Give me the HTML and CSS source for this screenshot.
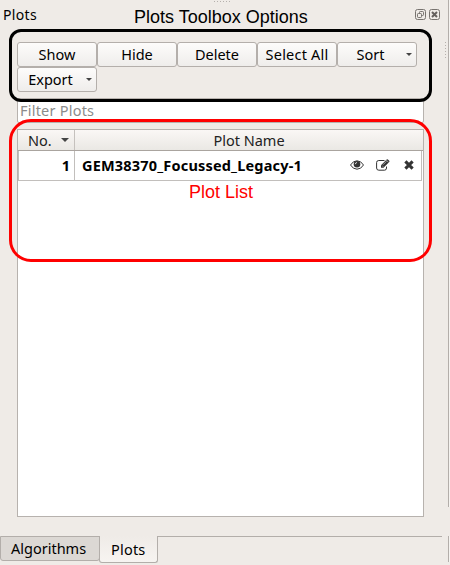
FILE: index.html
```html
<!DOCTYPE html>
<html lang="en">
<head>
<meta charset="utf-8">
<title>Plots</title>
<link rel="stylesheet" href="styles.css">
</head>
<body>
<div class="window">
  <main class="dock">
    <header class="titlebar">
      <span class="dock-title">Plots</span>
      <span class="caption">Plots Toolbox Options</span>
      <svg class="window-icons" width="26" height="12" viewBox="0 0 26 12" fill="none" stroke="#77736f">
        <rect x=".5" y=".5" width="10" height="10" rx="2"/>
        <rect x="4.5" y="2.5" width="4" height="4" rx=".8"/>
        <rect x="2.5" y="4.5" width="4" height="4" rx=".8" fill="#efebe7"/>
        <rect x="14.5" y=".5" width="10" height="10" rx="2"/>
        <path d="M17 3l5 5M22 3l-5 5" stroke="#65615e" stroke-width="2"/>
      </svg>
    </header>
    <div class="toolbar">
      <button class="show"><span>Show</span></button>
      <button class="hide"><span>Hide</span></button>
      <button class="delete"><span>Delete</span></button>
      <button class="select"><span>Select All</span></button>
      <button class="menu sort"><span>Sort</span></button>
      <button class="menu export"><span>Export</span></button>
    </div>
    <div class="filter"><span>Filter Plots</span></div>
    <section class="list">
      <div class="list-head">
        <div class="col-no"><span>No.</span></div>
        <div class="col-name"><span>Plot Name</span></div>
      </div>
      <div class="list-row">
        <div class="cell-no">1</div>
        <div class="cell-name"><span>GEM38370_Focussed_Legacy-1</span></div>
        <div class="actions">
          <svg width="14" height="12" viewBox="0 0 14 12"><path d="M.5 6Q3 1.8 7 1.8T13.5 6Q11 10.2 7 10.2T.5 6Z" fill="none" stroke="#333"/><circle cx="7" cy="5.3" r="3.3" fill="#333"/><path d="M5.3 5.2Q5.4 3.6 7 3.5" fill="none" stroke="#fff" stroke-width=".8"/></svg>
          <svg width="14" height="12" viewBox="0 0 14 12"><path d="M8.5 1.5H2.8Q.6 1.5.6 3.5V9Q.6 11.2 2.8 11.2H8.5Q10.5 11.2 10.5 9V7.5" fill="none" stroke="#333"/><path d="M5 8.8V6.2L10.7.5Q11.3-.1 11.9.5L13.2 1.8Q13.7 2.4 13.2 3L7.5 8.8Z" fill="#333"/><path d="M6 6.5L7.3 7.8M7 5.8L10.5 2.3M10.3 1.1L12.6 3.4" fill="none" stroke="#ddd" stroke-width=".6"/></svg>
          <svg width="10" height="10" viewBox="0 0 10 10"><path d="M1.4 1.4L8.6 8.6M8.6 1.4L1.4 8.6" stroke="#333" stroke-width="3.1"/></svg>
        </div>
      </div>
      <div class="note">Plot List</div>
    </section>
    <nav class="tabs">
      <div class="tab algorithms"><span>Algorithms</span></div>
      <div class="tab plots"><span>Plots</span></div>
      <div class="tab-line"></div>
    </nav>
  </main>
  <div class="grip grip-top"></div>
  <div class="grip grip-side"></div>
  <div class="edge"></div>
  <div class="frame frame-options"></div>
  <div class="frame frame-list"></div>
</div>
</body>
</html>
```
FILE: styles.css
```css
* { box-sizing: border-box; }
body { margin: 0; background: #efebe7; color: #000; font: 14.5px/20px "Noto Sans", sans-serif; }
span { white-space: nowrap; }
.window { position: relative; width: 450px; height: 565px; overflow: hidden; }
.dock { display: flex; flex-direction: column; width: 442px; height: 565px; }
.titlebar { display: flex; height: 42px; padding: 5px 0 0 3px; }
.dock-title { width: 131px; font-size: 14px; letter-spacing: .35px; }
.caption { width: 281px; font: 18px/24px "Liberation Sans", sans-serif; }
.window-icons { margin-top: 4px; }
.toolbar { display: grid; grid-template-columns: repeat(5, 80px); grid-auto-rows: 25px; height: 56px; margin-left: 17px; }
button { position: relative; padding: 0; border: 1px solid #b4afab; border-radius: 3px; background: linear-gradient(#fdfcfb, #efedeb); color: #000; font: inherit; line-height: 23px; }
.select { letter-spacing: .2px; }
.menu { padding-right: 13px; }
.menu::after { content: ""; position: absolute; right: 4px; top: 10px; border: 3px solid transparent; border-top-color: #444; border-bottom: 0; }
.filter { width: 407px; height: 25px; margin-left: 17px; padding: 1px 2px; border: 1px solid #b7b2ae; border-radius: 2px; background: #fff; color: #8b8b8b; letter-spacing: .22px; }
.list { width: 407px; height: 388px; margin: 6px 0 0 17px; border: 1px solid #b7b2ae; background: #fff; }
.list-head { display: flex; height: 21px; border-bottom: 1px solid #aaa49f; background: linear-gradient(#faf7f5, #eae8e4); color: #222; }
.col-no { position: relative; width: 57px; padding-left: 10px; border-right: 1px solid #c5c1bd; line-height: 20px; }
.col-no::after { content: ""; position: absolute; right: 5px; top: 8px; border: 4px solid transparent; border-top-color: #444; border-bottom: 0; }
.col-name { flex: 1; text-align: center; line-height: 20px; }
.list-row { display: flex; height: 30px; margin-right: 1px; border: solid #c2bfbc; border-width: 0 1px 1px; font-weight: 700; line-height: 28px; }
.cell-no { width: 56px; padding-right: 4px; border-right: 1px solid #c2bfbc; text-align: right; }
.cell-name { width: 275px; padding-left: 7px; letter-spacing: .18px; }
.actions { display: flex; align-items: center; gap: 12px; height: 28px; }
.actions svg:last-child { margin-left: 2px; }
.note { padding-left: 1px; color: #f00; text-align: center; font: 18px/22px "Liberation Sans", sans-serif; }
.tabs { display: flex; height: 29px; margin-top: 19px; }
.tab { border: 1px solid #b3aeaa; border-radius: 0 0 3px 3px; }
.algorithms { width: 100px; height: 25px; padding-left: 10px; background: #dcd8d4; line-height: 22px; }
.plots { width: 59px; height: 27px; margin-left: -1px; padding-left: 11px; border-top: 0; background: linear-gradient(#efebe7, #f7f4f1); line-height: 27px; letter-spacing: .2px; }
.tab-line { flex: 1; height: 1px; background: #b3aeaa; }
.grip { position: absolute; }
.grip-top { left: 214px; top: 1px; width: 16px; height: 1px; background: repeating-linear-gradient(90deg, #b5b0ac 0 1px, transparent 1px 3px); }
.grip-side { left: 445px; top: 42px; width: 1px; height: 16px; background: repeating-linear-gradient(#b5b0ac 0 1px, transparent 1px 3px); }
.edge { position: absolute; left: 448px; top: 0; width: 2px; height: 562px; background: linear-gradient(90deg, #b3aeaa 1px, #f5f3f0 1px); }
.edge::after { content: ""; position: absolute; left: 0; top: 507px; width: 2px; height: 29px; background: #efebe7; }
.frame { position: absolute; left: 9px; width: 423px; pointer-events: none; }
.frame-options { top: 29px; height: 73px; border: 3px solid #000; border-radius: 12px; }
.frame-list { top: 119px; height: 143px; border: 3px solid #f00; border-radius: 22px; }
```
